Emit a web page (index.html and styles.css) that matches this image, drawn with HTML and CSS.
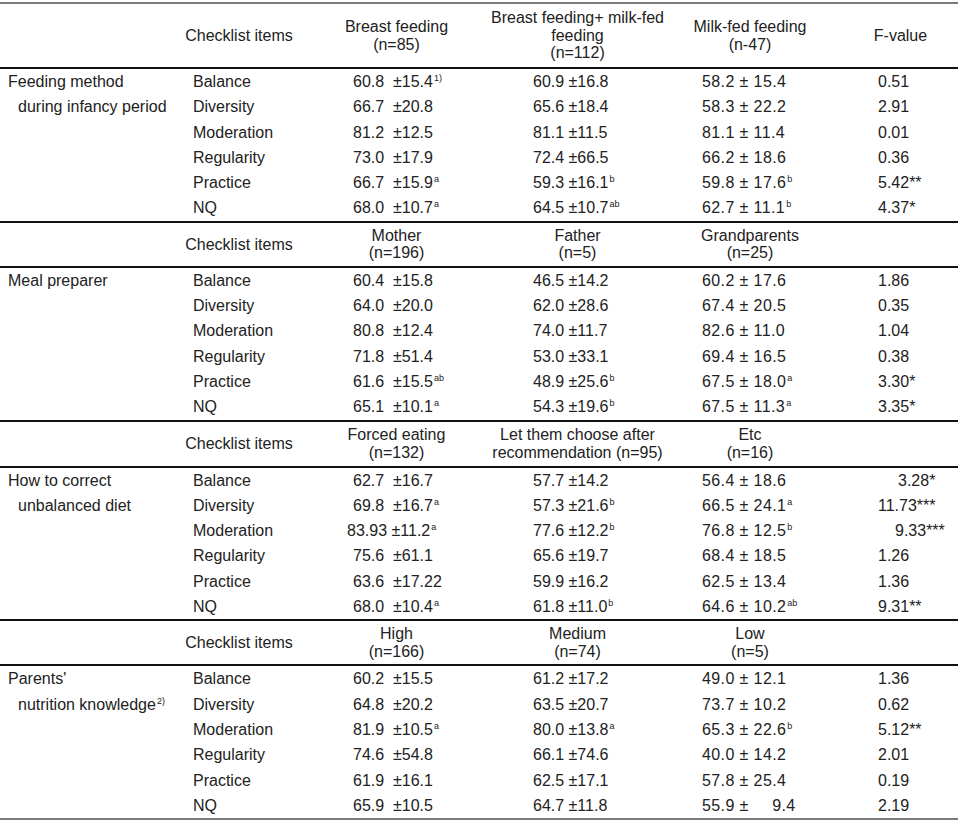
FILE: index.html
```html
<!DOCTYPE html>
<html>
<head>
<meta charset="utf-8">
<link rel="stylesheet" href="styles.css">
</head>
<body>
<div class="tbl">
  <div class="head h1">
    <div class="hc"></div>
    <div class="hc">Checklist items</div>
    <div class="hc">Breast feeding<br>(n=85)</div>
    <div class="hc">Breast feeding+ milk-fed<br>feeding<br>(n=112)</div>
    <div class="hc">Milk-fed feeding<br>(n-47)</div>
    <div class="hc">F-value</div>
  </div>
  <div class="body">
    <div class="lab"><span>Feeding method</span><span class="ind">during infancy period</span></div>
    <div class="it">Balance</div><div class="c3">60.8&nbsp; ±15.4<span class="s">1)</span></div><div class="c4">60.9 ±16.8</div><div class="c5">58.2 ±&nbsp;15.4</div><div class="f">0.51</div>
    <div class="it">Diversity</div><div class="c3">66.7&nbsp; ±20.8</div><div class="c4">65.6 ±18.4</div><div class="c5">58.3 ±&nbsp;22.2</div><div class="f">2.91</div>
    <div class="it">Moderation</div><div class="c3">81.2&nbsp; ±12.5</div><div class="c4">81.1 ±11.5</div><div class="c5">81.1 ±&nbsp;11.4</div><div class="f">0.01</div>
    <div class="it">Regularity</div><div class="c3">73.0&nbsp; ±17.9</div><div class="c4">72.4 ±66.5</div><div class="c5">66.2 ±&nbsp;18.6</div><div class="f">0.36</div>
    <div class="it">Practice</div><div class="c3">66.7&nbsp; ±15.9<span class="s">a</span></div><div class="c4">59.3 ±16.1<span class="s">b</span></div><div class="c5">59.8 ±&nbsp;17.6<span class="s">b</span></div><div class="f">5.42**</div>
    <div class="it">NQ</div><div class="c3">68.0&nbsp; ±10.7<span class="s">a</span></div><div class="c4">64.5 ±10.7<span class="s">ab</span></div><div class="c5">62.7 ±&nbsp;11.1<span class="s">b</span></div><div class="f">4.37*</div>
  </div>

  <div class="head h2 sep">
    <div class="hc"></div>
    <div class="hc">Checklist items</div>
    <div class="hc">Mother<br>(n=196)</div>
    <div class="hc">Father<br>(n=5)</div>
    <div class="hc">Grandparents<br>(n=25)</div>
    <div class="hc"></div>
  </div>
  <div class="body">
    <div class="lab"><span>Meal preparer</span></div>
    <div class="it">Balance</div><div class="c3">60.4&nbsp; ±15.8</div><div class="c4">46.5 ±14.2</div><div class="c5">60.2 ±&nbsp;17.6</div><div class="f">1.86</div>
    <div class="it">Diversity</div><div class="c3">64.0&nbsp; ±20.0</div><div class="c4">62.0 ±28.6</div><div class="c5">67.4 ±&nbsp;20.5</div><div class="f">0.35</div>
    <div class="it">Moderation</div><div class="c3">80.8&nbsp; ±12.4</div><div class="c4">74.0 ±11.7</div><div class="c5">82.6 ±&nbsp;11.0</div><div class="f">1.04</div>
    <div class="it">Regularity</div><div class="c3">71.8&nbsp; ±51.4</div><div class="c4">53.0 ±33.1</div><div class="c5">69.4 ±&nbsp;16.5</div><div class="f">0.38</div>
    <div class="it">Practice</div><div class="c3">61.6&nbsp; ±15.5<span class="s">ab</span></div><div class="c4">48.9 ±25.6<span class="s">b</span></div><div class="c5">67.5 ±&nbsp;18.0<span class="s">a</span></div><div class="f">3.30*</div>
    <div class="it">NQ</div><div class="c3">65.1&nbsp; ±10.1<span class="s">a</span></div><div class="c4">54.3 ±19.6<span class="s">b</span></div><div class="c5">67.5 ±&nbsp;11.3<span class="s">a</span></div><div class="f">3.35*</div>
  </div>

  <div class="head h3 sep">
    <div class="hc"></div>
    <div class="hc">Checklist items</div>
    <div class="hc">Forced eating<br>(n=132)</div>
    <div class="hc">Let them choose after<br>recommendation (n=95)</div>
    <div class="hc">Etc<br>(n=16)</div>
    <div class="hc"></div>
  </div>
  <div class="body">
    <div class="lab"><span>How to correct</span><span class="ind">unbalanced diet</span></div>
    <div class="it">Balance</div><div class="c3">62.7&nbsp; ±16.7</div><div class="c4">57.7 ±14.2</div><div class="c5">56.4 ±&nbsp;18.6</div><div class="f f-a">3.28*</div>
    <div class="it">Diversity</div><div class="c3">69.8&nbsp; ±16.7<span class="s">a</span></div><div class="c4">57.3 ±21.6<span class="s">b</span></div><div class="c5">66.5 ±&nbsp;24.1<span class="s">a</span></div><div class="f">11.73***</div>
    <div class="it">Moderation</div><div class="c3 wide">83.93 ±11.2<span class="s">a</span></div><div class="c4">77.6 ±12.2<span class="s">b</span></div><div class="c5">76.8 ±&nbsp;12.5<span class="s">b</span></div><div class="f f-b">9.33***</div>
    <div class="it">Regularity</div><div class="c3">75.6&nbsp; ±61.1</div><div class="c4">65.6 ±19.7</div><div class="c5">68.4 ±&nbsp;18.5</div><div class="f">1.26</div>
    <div class="it">Practice</div><div class="c3">63.6&nbsp; ±17.22</div><div class="c4">59.9 ±16.2</div><div class="c5">62.5 ±&nbsp;13.4</div><div class="f">1.36</div>
    <div class="it">NQ</div><div class="c3">68.0&nbsp; ±10.4<span class="s">a</span></div><div class="c4">61.8 ±11.0<span class="s">b</span></div><div class="c5">64.6 ±&nbsp;10.2<span class="s">ab</span></div><div class="f">9.31**</div>
  </div>

  <div class="head h4 sep">
    <div class="hc"></div>
    <div class="hc">Checklist items</div>
    <div class="hc">High<br>(n=166)</div>
    <div class="hc">Medium<br>(n=74)</div>
    <div class="hc">Low<br>(n=5)</div>
    <div class="hc"></div>
  </div>
  <div class="body">
    <div class="lab"><span>Parents'</span><span class="ind">nutrition knowledge<span class="s">2)</span></span></div>
    <div class="it">Balance</div><div class="c3">60.2&nbsp; ±15.5</div><div class="c4">61.2 ±17.2</div><div class="c5">49.0 ±&nbsp;12.1</div><div class="f">1.36</div>
    <div class="it">Diversity</div><div class="c3">64.8&nbsp; ±20.2</div><div class="c4">63.5 ±20.7</div><div class="c5">73.7 ±&nbsp;10.2</div><div class="f">0.62</div>
    <div class="it">Moderation</div><div class="c3">81.9&nbsp; ±10.5<span class="s">a</span></div><div class="c4">80.0 ±13.8<span class="s">a</span></div><div class="c5">65.3 ±&nbsp;22.6<span class="s">b</span></div><div class="f">5.12**</div>
    <div class="it">Regularity</div><div class="c3">74.6&nbsp; ±54.8</div><div class="c4">66.1 ±74.6</div><div class="c5">40.0 ±&nbsp;14.2</div><div class="f">2.01</div>
    <div class="it">Practice</div><div class="c3">61.9&nbsp; ±16.1</div><div class="c4">62.5 ±17.1</div><div class="c5">57.8 ±&nbsp;25.4</div><div class="f">0.19</div>
    <div class="it">NQ</div><div class="c3">65.9&nbsp; ±10.5</div><div class="c4">64.7 ±11.8</div><div class="c5">55.9 ±&nbsp;&#8199;&#8199;9.4</div><div class="f">2.19</div>
  </div>
</div>
</body>
</html>
```

FILE: styles.css
```css
html, body {
  margin: 0;
  padding: 0;
  background: #fff;
}
body {
  font-family: "Liberation Sans", Arial, sans-serif;
  font-size: 16px;
  color: #222;
}
.tbl {
  width: 958px;
  margin-top: 2px;
  border-top: 2px solid #7a7a7a;
  border-bottom: 2px solid #7a7a7a;
}
.head, .body {
  display: grid;
  grid-template-columns: 183px 112px 203px 159px 186px 1fr;
}
.head {
  border-bottom: 2px solid #111;
}
.head.sep {
  border-top: 2px solid #111;
}
.h1 { height: 63px; }
.h2 { height: 43px; }
.h3 { height: 44px; }
.h4 { height: 43px; }
.hc {
  display: flex;
  flex-direction: column;
  justify-content: center;
  align-items: center;
  text-align: center;
  line-height: 17.5px;
  white-space: nowrap;
}
.body {
  grid-auto-rows: 25.3px;
  line-height: 25.3px;
  white-space: nowrap;
}
.lab {
  grid-column: 1;
  grid-row: 1 / span 6;
  display: flex;
  flex-direction: column;
  padding-left: 8px;
}
.lab .ind {
  padding-left: 10px;
}
.it { padding-left: 10px; }
.c3 { padding-left: 58px; }
.c3.wide { padding-left: 52px; }
.c4 { padding-left: 35px; }
.c5 { padding-left: 45px; letter-spacing: 0.4px; }
.f { padding-left: 35px; }
.f.f-a { padding-left: 55px; }
.f.f-b { padding-left: 52px; }
.s {
  font-size: 9px;
  line-height: 0;
  vertical-align: 6px;
  margin-left: 1px;
  letter-spacing: 0;
}
```
